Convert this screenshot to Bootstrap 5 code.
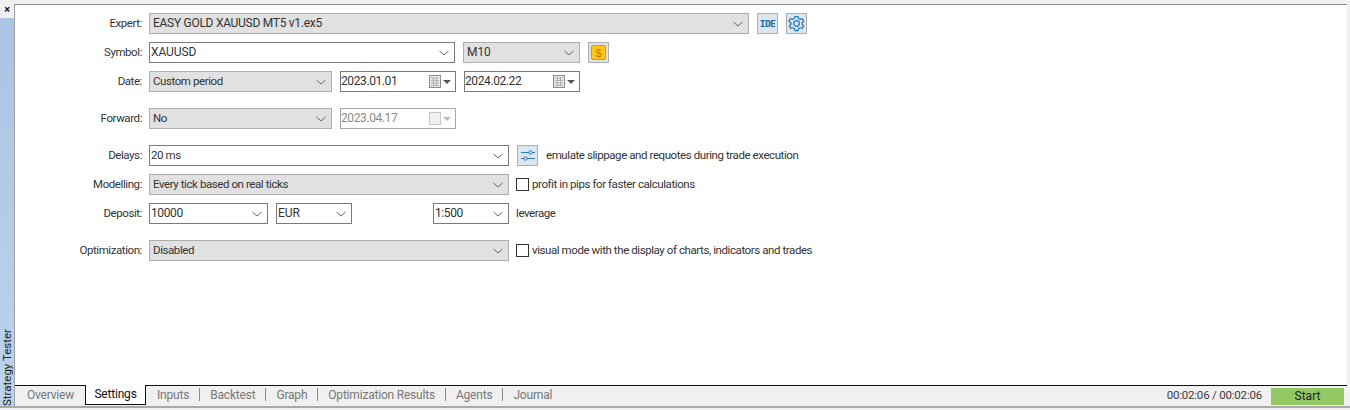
<!DOCTYPE html>
<html lang="en">
<head>
<meta charset="utf-8">
<title>Strategy Tester</title>
<link href="https://cdn.jsdelivr.net/npm/bootstrap@5.3.0/dist/css/bootstrap.min.css" rel="stylesheet">
<style>
html,body{height:410px;overflow:hidden}
body{background:#f0f0f0;font-family:Roboto,"Liberation Sans",sans-serif;font-size:11.5px;color:#333;letter-spacing:-.42px}
.shell{height:406px;padding-top:4px}
.rail{width:14px;flex:none}
.closer{height:14px;font-size:11px;font-weight:700;line-height:12px;text-align:center;color:#111}
.railbar{background:linear-gradient(#bcd3ec,#a9c5e3);color:#222;writing-mode:vertical-rl;transform:rotate(180deg);text-align:left;font-size:11.5px;line-height:14px;letter-spacing:0}
.mainpane{width:1333px;flex:none;border-top:1px solid #8f8f8f;border-left:1px solid #a0a0a0;background:#fff}
.formarea{padding-top:8px;padding-right:10px}
.frow{height:21px;margin-bottom:8px;gap:7px}
.frow-wide{margin-bottom:16px}
.flabel{width:127px;text-align:right;flex:none}
.gapped{gap:8px}
.form-select.fld,.datebox{height:21px;min-height:21px;border-radius:0;font-size:11.5px;line-height:19px;padding:0 20px 0 1px;color:#333;letter-spacing:-.42px;flex:none;box-shadow:none;background-color:#fff;border:1px solid #7a7a7a;background-size:12px 8px;background-position:right 4px center;background-image:url("data:image/svg+xml,%3Csvg xmlns='http://www.w3.org/2000/svg' viewBox='0 0 12 8'%3E%3Cpath d='M1.500 2l4.500 4 4.500-4' fill='none' stroke='%23666' stroke-width='1'/%3E%3C/svg%3E")}
.form-select.fld.flat{background-color:#e1e1e1;border-color:#adadad;padding-left:3px}
.form-select.fld.caps{font-size:12px;letter-spacing:-.1px}
.form-select.fld.capslong{font-size:12px;letter-spacing:-.28px}
.form-select.fld.nums,.datebox{font-size:12px;letter-spacing:-.4px}
.datebox{background-image:none;padding:0 3px 0 0;width:116px}
.datebox.off{color:#8a8a8a;border-color:#a6a6a6}
.w-expert{width:600px}.w-symbol{width:306px}.w-m10{width:117px}.w-period{width:183px}.w-delay{width:360px}.w-dep{width:119px}.w-cur{width:76px}.w-lev{width:76px}
.ms-lev{margin-left:73px}
.pull-left{margin-left:-1px}
.toolbtn{width:21px;height:21px;flex:none;background:#e1e1e1;border:1px solid #adadad;padding:0;border-radius:0;color:#1f6fb4}
.toolbtn.tint{background:#dce6ef}
.toolbtn svg{display:block;margin:auto}
.idetxt{font-family:"DejaVu Sans Mono","Liberation Mono",monospace;font-size:9.500px;font-weight:700;letter-spacing:-.6px;line-height:19px;color:#1c6bae;display:block;text-align:center}
.form-check-input.tick{width:13px;height:13px;margin:0;border-radius:0;border:1px solid #333;box-shadow:none;flex:none}
.tickrow{gap:3px}
.bottombar{height:21px;background:#f0f0f0;border-top:1px solid #111;padding-right:3px;color:#777;font-size:12px;letter-spacing:-.2px}
.tabitem{padding:0 10px;line-height:16px;border-right:1px solid #8a8a8a;height:13px;display:flex;align-items:center;margin-top:-3px}
.tabitem.plain{border-right:0}
.tabfirst{padding-left:12px;padding-right:11px}
.tabactive{background:#fff;color:#111;border:1px solid #111;border-top:0;margin-top:-1px;height:20px;width:61px;justify-content:center;padding:0 0 2px;align-self:flex-start;margin-right:1px}
.tabline{align-items:center;height:100%}
.elapsed{color:#3c3c3c;margin-right:9px;font-size:11.500px;letter-spacing:-.2px}
.startbtn{width:73px;height:17px;line-height:15px;padding:0;background:#92c962;border:0;border-radius:0;color:#222;font-size:12px;letter-spacing:0}
.footline{height:4px;background:#f0f0f0;border-top:2px solid #a8a8a8}
</style>
</head>
<body>
<div class="shell d-flex">
  <div class="rail d-flex flex-column">
    <div class="closer">×</div>
    <div class="railbar flex-grow-1">Strategy Tester</div>
  </div>
  <div class="mainpane d-flex flex-column">
    <div class="formarea flex-grow-1">
      <div class="frow d-flex align-items-center">
        <div class="flabel">Expert:</div>
        <div class="d-flex align-items-center gapped">
          <select class="form-select fld flat capslong w-expert"><option>EASY GOLD XAUUSD MT5 v1.ex5</option></select>
          <button class="btn toolbtn tint" type="button"><span class="idetxt">IDE</span></button>
          <button class="btn toolbtn tint" type="button">
            <svg width="17" height="17" viewBox="0 0 17 17" fill="none" stroke="#1f75bb" stroke-width="1.200"><path d="M7 1.500h3l.5 2 1.700.9 2-.6 1.400 2.500-1.500 1.400v1.800l1.500 1.400-1.400 2.500-2-.6-1.700.9-.5 2H7l-.5-2-1.700-.9-2 .6-1.400-2.500 1.500-1.400V7.700L.9 6.300l1.400-2.500 2 .6 1.700-.9z"/><circle cx="8.500" cy="8.500" r="2.800"/></svg>
          </button>
        </div>
      </div>
      <div class="frow d-flex align-items-center">
        <div class="flabel">Symbol:</div>
        <div class="d-flex align-items-center gapped">
          <select class="form-select fld caps w-symbol"><option>XAUUSD</option></select>
          <select class="form-select fld flat caps w-m10"><option>M10</option></select>
          <button class="btn toolbtn" type="button">
            <svg width="17" height="17" viewBox="0 0 17 17"><rect x="1.500" y="1.500" width="14" height="14" rx="1.500" fill="#fdc913" stroke="#d79a10"/><text x="8.500" y="12.500" text-anchor="middle" font-family="Liberation Sans,sans-serif" font-size="11" fill="#c17a12">$</text></svg>
          </button>
        </div>
      </div>
      <div class="frow frow-wide d-flex align-items-center">
        <div class="flabel">Date:</div>
        <div class="d-flex align-items-center gapped">
          <select class="form-select fld flat w-period"><option>Custom period</option></select>
          <div class="datebox d-flex align-items-center justify-content-between"><span>2023.01.01</span>
            <svg width="23" height="13" viewBox="0 0 23 13"><rect x=".5" y=".5" width="11" height="12" fill="#e8e8e8" stroke="#8c8c8c"/><path d="M2 3h8M2 5.500h8M2 8h8M2 10.500h8M4.500 2v9M7.500 2v9" stroke="#a8a8a8" stroke-width=".8"/><path d="M14 5h8l-4 4z" fill="#555"/></svg></div>
          <div class="datebox d-flex align-items-center justify-content-between"><span>2024.02.22</span>
            <svg width="23" height="13" viewBox="0 0 23 13"><rect x=".5" y=".5" width="11" height="12" fill="#e8e8e8" stroke="#8c8c8c"/><path d="M2 3h8M2 5.500h8M2 8h8M2 10.500h8M4.500 2v9M7.500 2v9" stroke="#a8a8a8" stroke-width=".8"/><path d="M14 5h8l-4 4z" fill="#555"/></svg></div>
        </div>
      </div>
      <div class="frow frow-wide d-flex align-items-center">
        <div class="flabel">Forward:</div>
        <div class="d-flex align-items-center gapped">
          <select class="form-select fld flat w-period"><option>No</option></select>
          <div class="datebox off d-flex align-items-center justify-content-between"><span>2023.04.17</span>
            <svg width="23" height="13" viewBox="0 0 23 13"><rect x=".5" y=".5" width="11" height="12" fill="#f0f0f0" stroke="#c8c8c8"/><path d="M14 5h8l-4 4z" fill="#bbb"/></svg></div>
        </div>
      </div>
      <div class="frow d-flex align-items-center">
        <div class="flabel">Delays:</div>
        <div class="d-flex align-items-center gapped">
          <select class="form-select fld w-delay"><option>20 ms</option></select>
          <button class="btn toolbtn tint" type="button">
            <svg width="17" height="17" viewBox="0 0 17 17" fill="none" stroke="#2a78b5" stroke-width="1"><path d="M2 5.500h8M13 5.500h3M2 11.500h3M8 11.500h8"/><circle cx="11.500" cy="5.500" r="1.700"/><circle cx="6.500" cy="11.500" r="1.700"/></svg>
          </button>
          <span>emulate slippage and requotes during trade execution</span>
        </div>
      </div>
      <div class="frow d-flex align-items-center">
        <div class="flabel">Modelling:</div>
        <div class="d-flex align-items-center gapped">
          <select class="form-select fld flat w-delay"><option>Every tick based on real ticks</option></select>
          <label class="d-flex align-items-center tickrow pull-left"><input class="form-check-input tick" type="checkbox"><span>profit in pips for faster calculations</span></label>
        </div>
      </div>
      <div class="frow frow-wide d-flex align-items-center">
        <div class="flabel">Deposit:</div>
        <div class="d-flex align-items-center gapped">
          <select class="form-select fld nums w-dep"><option>10000</option></select>
          <select class="form-select fld caps w-cur"><option>EUR</option></select>
          <select class="form-select fld nums w-lev ms-lev"><option>1:500</option></select>
          <span class="pull-left">leverage</span>
        </div>
      </div>
      <div class="frow d-flex align-items-center">
        <div class="flabel">Optimization:</div>
        <div class="d-flex align-items-center gapped">
          <select class="form-select fld flat w-delay"><option>Disabled</option></select>
          <label class="d-flex align-items-center tickrow pull-left"><input class="form-check-input tick" type="checkbox"><span>visual mode with the display of charts, indicators and trades</span></label>
        </div>
      </div>
    </div>
    <div class="bottombar d-flex justify-content-between align-items-center">
      <div class="d-flex tabline">
        <span class="tabitem tabfirst plain">Overview</span>
        <span class="tabitem tabactive">Settings</span>
        <span class="tabitem">Inputs</span>
        <span class="tabitem">Backtest</span>
        <span class="tabitem">Graph</span>
        <span class="tabitem">Optimization Results</span>
        <span class="tabitem">Agents</span>
        <span class="tabitem plain">Journal</span>
      </div>
      <div class="d-flex align-items-center">
        <span class="elapsed">00:02:06 / 00:02:06</span>
        <button class="btn startbtn" type="button">Start</button>
      </div>
    </div>
  </div>
</div>
<div class="footline"></div>
<script src="https://cdn.jsdelivr.net/npm/bootstrap@5.3.0/dist/js/bootstrap.bundle.min.js"></script>
</body>
</html>
